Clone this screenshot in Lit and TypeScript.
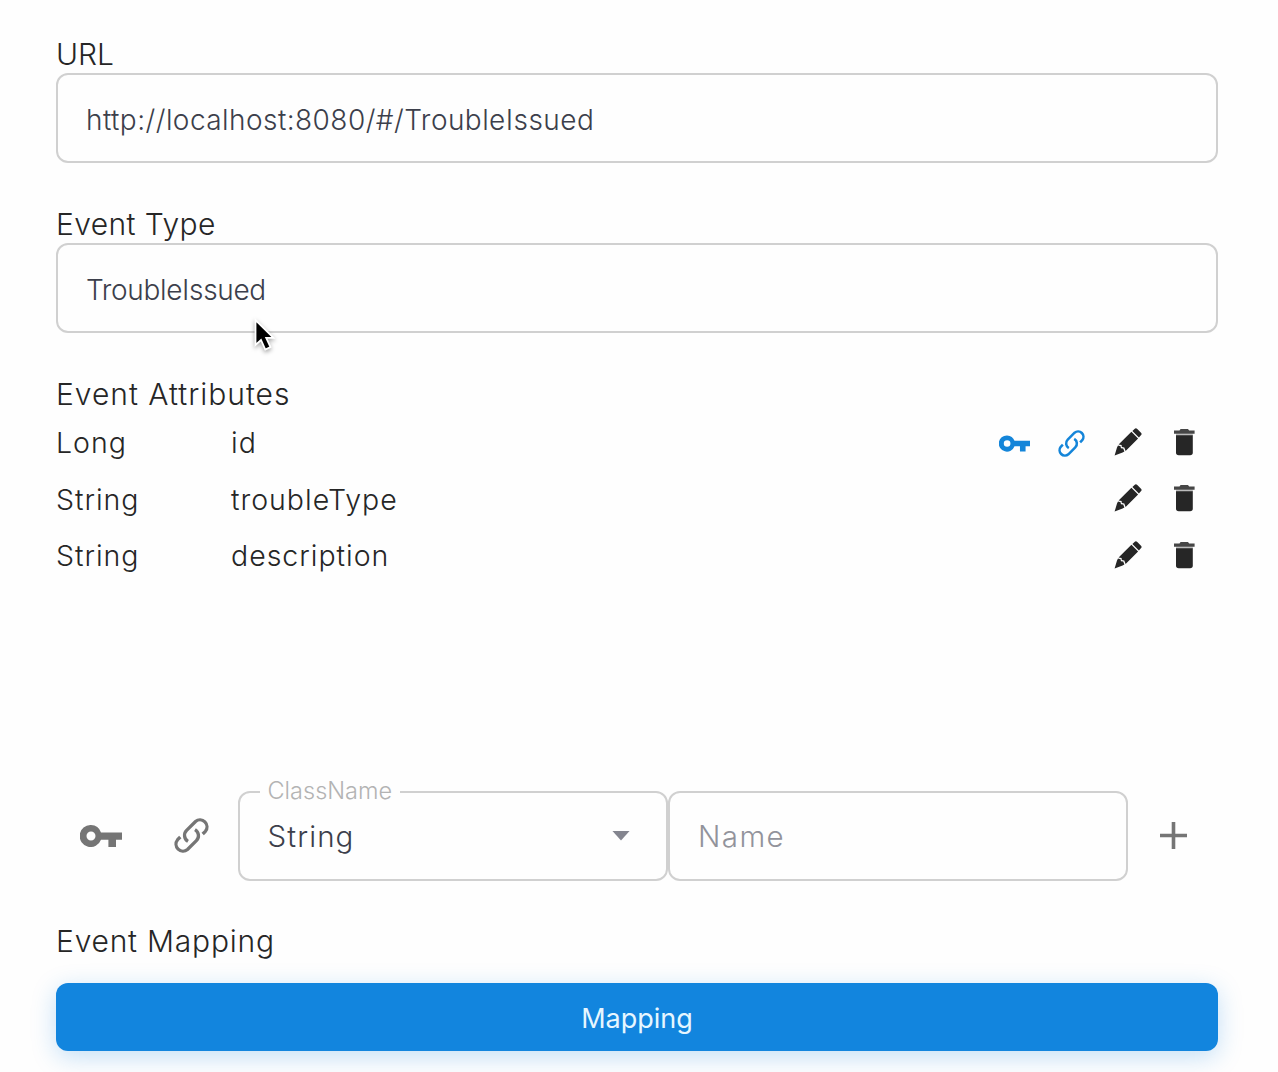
import { LitElement, html, svg, css } from "lit";
import { customElement, property, state } from "lit/decorators.js";

const keyIcon = html`<svg viewBox="0 0 42 22" fill="currentColor">
  <path fill-rule="evenodd" d="M11 0A11 11 0 1 0 21 14.8H28.4V22H36V14.8H42V7.4H21A11 11 0 0 0 11 0ZM11 6.5A4.5 4.5 0 1 1 11 15.5A4.5 4.5 0 1 1 11 6.5Z"/>
</svg>`;

const linkHalf = "M12.9 25.6L10.2 28.3A7 7 0 0 0 20.1 38.1L29 29.2A7 7 0 0 0 27.6 18.2";
const linkIcon = html`<svg viewBox="6.6 6.6 35 35" fill="none" stroke="currentColor" stroke-width="3.3">
  ${svg`<path d=${linkHalf}/><path d=${linkHalf} transform="rotate(180 24.1 24.1)"/>`}
</svg>`;

const pencilIcon = html`<svg viewBox="0 0 28 28" fill="currentColor">
  <path d="M20.5 1Q21.9 -.3 23.3 1L27 4.7Q28.2 6 26.9 7.3L24.9 9.4L18.4 3Z"/>
  <path d="M17.4 3.8L24.1 10.4L11.6 22.9L10.3 19.4L7.8 19.1L7.6 17.1L4.6 16.4Z"/>
  <path d="M4 17.4L6.6 18.2L6.9 20.2L9.2 20.5L10.4 23.5L8.6 24.5L0.6 27.6L3 19.6Z"/>
</svg>`;

const trashIcon = html`<svg viewBox="0 0 21 28" fill="currentColor">
  <path d="M5.5 2.4L6.6 1H14L15.1 2.4H20.6V5.7H0V2.4Z" opacity=".85"/>
  <path d="M2 5.7H18.8V8H2Z" opacity=".3"/>
  <path d="M2 7.2H18.8V24.6Q18.8 27.3 16.1 27.3H4.7Q2 27.3 2 24.6Z"/>
</svg>`;

interface Attribute {
  type: string;
  name: string;
  key?: boolean;
}

@customElement("attribute-row")
class AttributeRow extends LitElement {
  @property({ attribute: false }) attr!: Attribute;

  static styles = css`
    :host { display: grid; grid-template-columns: 175px 1fr auto; align-items: center; height: 56.6px; }
    .text { letter-spacing: 0.98px; white-space: nowrap; }
    .actions { display: grid; grid-template-columns: 31px 28px 32px 21px; column-gap: 28px; align-items: center; margin-right: 23.5px; }
    .actions svg { display: block; }
    .blue { color: #1485d9; padding-top: 1px; }
    .key svg { width: 31px; height: 17px; }
    .link svg { width: 27px; height: 27px; }
    .pencil, .trash { padding-bottom: 2px; }
    .pencil svg { width: 28px; height: 28px; }
    .trash svg { width: 21px; height: 28px; }
  `;

  render() {
    return html`
      <span class="text">${this.attr.type}</span>
      <span class="text">${this.attr.name}</span>
      <div class="actions">
        <span class="blue key">${this.attr.key ? keyIcon : ""}</span>
        <span class="blue link">${this.attr.key ? linkIcon : ""}</span>
        <span class="pencil">${pencilIcon}</span>
        <span class="trash">${trashIcon}</span>
      </div>
    `;
  }
}

@customElement("app-root")
class AppRoot extends LitElement {
  @state() attributes: Attribute[] = [
    { type: "Long", name: "id", key: true },
    { type: "String", name: "troubleType" },
    { type: "String", name: "description" },
  ];

  static styles = css`
    :host {
      display: block; position: relative; box-sizing: border-box; height: 1072px; overflow: hidden;
      padding: 36px 60px 0 56px; background: #fefefe; color: #262626;
      font: 300 28.5px Inter, "Liberation Sans", sans-serif;
    }
    svg { display: block; }
    .label { height: 36.5px; line-height: 36.5px; font-size: 30px; white-space: nowrap; }
    .l2 { letter-spacing: 0.4px; }
    .l3 { letter-spacing: 0.98px; }
    .field {
      box-sizing: border-box; height: 90.5px; border: 2px solid #d0d0d0; border-radius: 12px;
      display: flex; align-items: center; padding: 4px 28px 0; color: #3c3f4b; font-size: 28px; background: #fefefe;
    }
    .group { margin-bottom: 43px; }
    .rows { height: 365.5px; margin-top: 2px; }
    .editor { display: flex; align-items: center; height: 90px; color: #757575; margin-top: 10.5px; }
    .editor .key { width: 42px; margin-left: 24px; }
    .editor .link { width: 35px; margin: 0 28.5px 0 52px; }
    .editor .field { padding-top: 0; height: 90px; }
    .select { width: 430.5px; position: relative; justify-content: space-between; }
    .legend {
      position: absolute; left: 20px; top: -17px; padding: 0 8px; background: #fefefe;
      font-size: 23.5px; line-height: 30px; color: #b3b3b3; white-space: nowrap;
    }
    .caret { width: 18px; height: 10px; margin-right: 8px; background: #84858f; clip-path: polygon(0 0, 100% 0, 50% 100%); }
    .name { width: 460px; color: #92939b; }
    .plus { width: 27px; margin-left: 32px; }
    .mapping { margin-top: 42.5px; letter-spacing: 0.78px; }
    .button {
      box-sizing: border-box; display: flex; align-items: center; justify-content: center; height: 67.5px; margin-top: 23.5px;
      padding-top: 3px; border-radius: 12px; background: #1285de; color: #e6f6ff; font-weight: 400; font-size: 27px;
      box-shadow: 0 6px 24px rgba(18, 133, 222, 0.25);
    }
    .cursor { position: absolute; left: 250px; top: 314px; width: 30px; height: 42px; filter: drop-shadow(0 2px 2px rgba(0, 0, 0, 0.35)); }
    .t-url { letter-spacing: 0.44px; }
    .t-type { letter-spacing: -0.35px; }
    .t-string { font-size: 29.5px; letter-spacing: 1.1px; }
    .t-name { font-size: 29.5px; letter-spacing: 1.4px; }
  `;

  render() {
    return html`
      <div class="group">
        <div class="label l1"><span>URL</span></div>
        <div class="field"><span class="t-url">http://localhost:8080/#/TroubleIssued</span></div>
      </div>
      <div class="group">
        <div class="label l2"><span>Event Type</span></div>
        <div class="field"><span class="t-type">TroubleIssued</span></div>
      </div>
      <div class="label l3"><span>Event Attributes</span></div>
      <div class="rows">${this.attributes.map((a) => html`<attribute-row .attr=${a}></attribute-row>`)}</div>
      <div class="editor">
        <div class="key">${keyIcon}</div>
        <div class="link">${linkIcon}</div>
        <div class="field select">
          <span class="legend">ClassName</span>
          <span class="t-string">String</span>
          <span class="caret"></span>
        </div>
        <div class="field name"><span class="t-name">Name</span></div>
        <svg class="plus" viewBox="0 0 27 27"><path d="M13.5 0V27M0 13.5H27" stroke="currentColor" stroke-width="3.6"/></svg>
      </div>
      <div class="label mapping"><span>Event Mapping</span></div>
      <div class="button"><span>Mapping</span></div>
      <svg class="cursor" viewBox="0 0 30 42">
        <path d="M5.5 6V31L11 26L15.3 35.5L20.5 33L16.2 23.8H23.5Z" fill="#000" stroke="#fff" stroke-width="1.8"/>
      </svg>
    `;
  }
}
